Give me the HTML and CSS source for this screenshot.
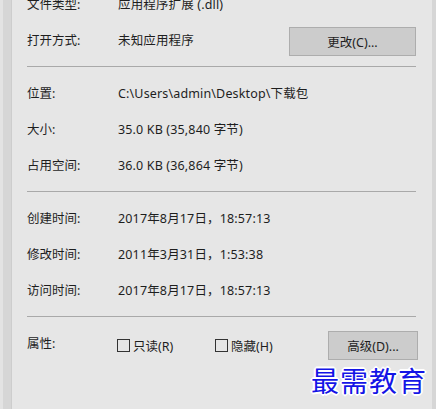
FILE: index.html
```html
<!DOCTYPE html>
<html lang="zh-CN">
<head>
    <meta charset="UTF-8">
    <title>属性</title>
    <link rel="stylesheet" href="styles.css">
</head>
<body>
    <div class="window">
        <div class="sheet">
            <div class="section first">
                <div class="row">
                    <span class="label">文件类型:</span>
                    <span class="value">应用程序扩展 (.dll)</span>
                </div>
                <div class="row">
                    <span class="label">打开方式:</span>
                    <span class="value">未知应用程序</span>
                    <button class="btn btn-change">更改(C)...</button>
                </div>
            </div>
            <hr class="sep">
            <div class="section">
                <div class="row">
                    <span class="label">位置:</span>
                    <span class="value">C:\Users\admin\Desktop\下载包</span>
                </div>
                <div class="row">
                    <span class="label">大小:</span>
                    <span class="value">35.0 KB (35,840 字节)</span>
                </div>
                <div class="row">
                    <span class="label">占用空间:</span>
                    <span class="value">36.0 KB (36,864 字节)</span>
                </div>
            </div>
            <hr class="sep">
            <div class="section">
                <div class="row">
                    <span class="label">创建时间:</span>
                    <span class="value">2017年8月17日，18:57:13</span>
                </div>
                <div class="row">
                    <span class="label">修改时间:</span>
                    <span class="value">2011年3月31日，1:53:38</span>
                </div>
                <div class="row">
                    <span class="label">访问时间:</span>
                    <span class="value">2017年8月17日，18:57:13</span>
                </div>
            </div>
            <hr class="sep">
            <div class="section">
                <div class="row">
                    <span class="label">属性:</span>
                    <label class="check"><span class="box"></span>只读(R)</label>
                    <label class="check"><span class="box"></span>隐藏(H)</label>
                    <button class="btn btn-adv">高级(D)...</button>
                </div>
            </div>
        </div>
    </div>

    <div class="watermark">最需教育</div>
</body>
</html>
```

FILE: styles.css
```css
* {
    margin: 0;
    padding: 0;
    box-sizing: border-box;
}

html, body {
    height: 100%;
}

body {
    background: #e3e3e3;
    font-family: 'Noto Sans', 'Noto Sans CJK SC', sans-serif;
    font-size: 12.5px;
    color: #1e1e1e;
    overflow: hidden;
    position: relative;
}

/* window frame */
.window {
    height: 100%;
    margin-left: 3px;
    border-left: 8px solid #d6d6d6;
    border-right: 4px solid #d6d6d6;
}

.sheet {
    height: 100%;
    background: #e6e6e6;
    border-left: 1px solid #cdcdcd;
    padding: 0 16px 0 15px;
    overflow: hidden;
}

/* sections */
.section {
    padding: 9px 0 7px;
}

.section.first {
    padding-top: 0;
    margin-top: -13px;
}

.row {
    height: 36px;
    padding-bottom: 3px;
    display: flex;
    align-items: center;
}

.label {
    width: 91px;
    flex-shrink: 0;
}

.value {
    white-space: nowrap;
    letter-spacing: 0.15px;
}

.sep {
    border: none;
    border-top: 1px solid #a9a9a9;
    height: 0;
    margin: 0;
}

/* buttons */
.btn {
    font-family: inherit;
    font-size: 12.5px;
    color: #1e1e1e;
    background: #cccccc;
    border: 1px solid #adadad;
    height: 29px;
    margin-left: auto;
}

.btn-change {
    width: 127px;
    margin-top: 3px;
}

.btn-adv {
    width: 90px;
    margin-right: -2px;
    margin-top: 6px;
}

/* checkboxes */
.check {
    width: 98px;
    display: flex;
    align-items: center;
    gap: 3px;
    margin-top: 5px;
    margin-left: -1px;
}

.check + .check {
    margin-left: 0;
}

.box {
    width: 13px;
    height: 13px;
    border: 1px solid #333333;
}

/* watermark overlay */
.watermark {
    position: absolute;
    right: 9px;
    top: 360px;
    font-family: 'Noto Sans CJK SC', serif;
    font-size: 28px;
    letter-spacing: 1px;
    color: #1414e6;
    text-shadow:
        1px 1px 0 #fff, -1px -1px 0 #fff,
        1px -1px 0 #fff, -1px 1px 0 #fff,
        2px 0 0 #fff, -2px 0 0 #fff,
        0 2px 0 #fff, 0 -2px 0 #fff;
}
```
